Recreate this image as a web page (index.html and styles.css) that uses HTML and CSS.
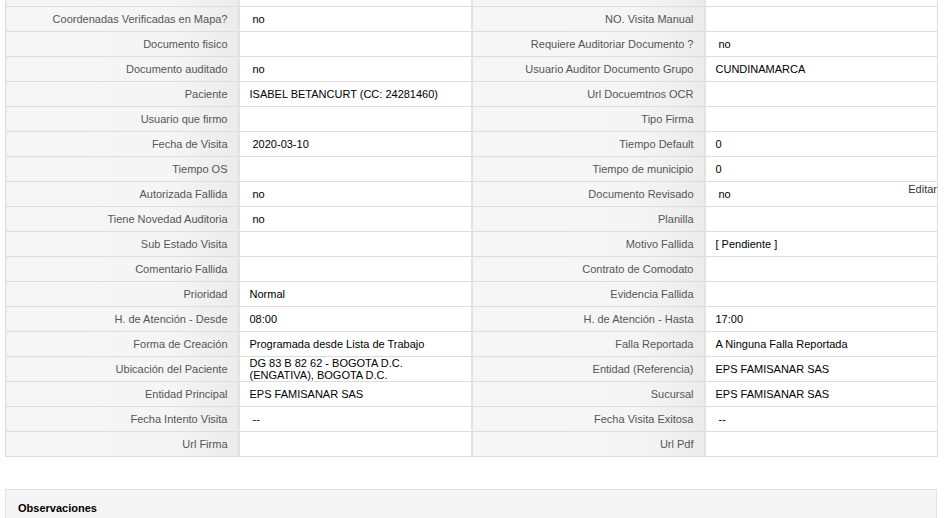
FILE: index.html
```html
<!DOCTYPE html>
<html lang="es">
<head>
  <meta charset="UTF-8">
  <title>Detalle Visita</title>
  <link rel="stylesheet" href="styles.css">
</head>
<body>

  <div class="wrap">
    <table class="detail">
      <colgroup>
        <col class="c-lbl"><col class="c-val"><col class="c-lbl"><col class="c-val">
      </colgroup>
      <tr><td class="lbl"></td><td class="val"></td><td class="lbl"></td><td class="val"></td></tr>
      <tr>
        <td class="lbl">Coordenadas Verificadas en Mapa?</td><td class="val sp">no</td>
        <td class="lbl">NO. Visita Manual</td><td class="val"></td>
      </tr>
      <tr>
        <td class="lbl">Documento fisico</td><td class="val"></td>
        <td class="lbl">Requiere Auditoriar Documento ?</td><td class="val sp">no</td>
      </tr>
      <tr>
        <td class="lbl">Documento auditado</td><td class="val sp">no</td>
        <td class="lbl">Usuario Auditor Documento Grupo</td><td class="val">CUNDINAMARCA</td>
      </tr>
      <tr>
        <td class="lbl">Paciente</td><td class="val">ISABEL BETANCURT (CC: 24281460)</td>
        <td class="lbl">Url Docuemtnos OCR</td><td class="val"></td>
      </tr>
      <tr>
        <td class="lbl">Usuario que firmo</td><td class="val"></td>
        <td class="lbl">Tipo Firma</td><td class="val"></td>
      </tr>
      <tr>
        <td class="lbl">Fecha de Visita</td><td class="val sp">2020-03-10</td>
        <td class="lbl">Tiempo Default</td><td class="val">0</td>
      </tr>
      <tr>
        <td class="lbl">Tiempo OS</td><td class="val"></td>
        <td class="lbl">Tiempo de municipio</td><td class="val">0</td>
      </tr>
      <tr>
        <td class="lbl">Autorizada Fallida</td><td class="val sp">no</td>
        <td class="lbl">Documento Revisado</td><td class="val sp edit-cell">no<a class="edit">Editar</a></td>
      </tr>
      <tr>
        <td class="lbl">Tiene Novedad Auditoria</td><td class="val sp">no</td>
        <td class="lbl">Planilla</td><td class="val"></td>
      </tr>
      <tr>
        <td class="lbl">Sub Estado Visita</td><td class="val"></td>
        <td class="lbl">Motivo Fallida</td><td class="val">[ Pendiente ]</td>
      </tr>
      <tr>
        <td class="lbl">Comentario Fallida</td><td class="val"></td>
        <td class="lbl">Contrato de Comodato</td><td class="val"></td>
      </tr>
      <tr>
        <td class="lbl">Prioridad</td><td class="val">Normal</td>
        <td class="lbl">Evidencia Fallida</td><td class="val"></td>
      </tr>
      <tr>
        <td class="lbl">H. de Atención - Desde</td><td class="val">08:00</td>
        <td class="lbl">H. de Atención - Hasta</td><td class="val">17:00</td>
      </tr>
      <tr>
        <td class="lbl">Forma de Creación</td><td class="val">Programada desde Lista de Trabajo</td>
        <td class="lbl">Falla Reportada</td><td class="val">A Ninguna Falla Reportada</td>
      </tr>
      <tr>
        <td class="lbl">Ubicación del Paciente</td><td class="val tight">DG 83 B 82 62 - BOGOTA D.C.<br>(ENGATIVA), BOGOTA D.C.</td>
        <td class="lbl">Entidad (Referencia)</td><td class="val">EPS FAMISANAR SAS</td>
      </tr>
      <tr>
        <td class="lbl">Entidad Principal</td><td class="val">EPS FAMISANAR SAS</td>
        <td class="lbl">Sucursal</td><td class="val">EPS FAMISANAR SAS</td>
      </tr>
      <tr>
        <td class="lbl">Fecha Intento Visita</td><td class="val sp">--</td>
        <td class="lbl">Fecha Visita Exitosa</td><td class="val sp">--</td>
      </tr>
      <tr>
        <td class="lbl">Url Firma</td><td class="val"></td>
        <td class="lbl">Url Pdf</td><td class="val"></td>
      </tr>
    </table>

    <div class="panel">
      <div class="panel-head">Observaciones</div>
    </div>
  </div>

</body>
</html>
```

FILE: styles.css
```css
body {
  margin: 0;
  font-family: "Liberation Sans", Arial, sans-serif;
  font-size: 11px;
  color: #000;
  background: #fff;
}
.wrap {
  padding: 0 14px 0 5px;
  margin-top: -19px;
}
.detail {
  width: 932px;
  border-collapse: collapse;
  table-layout: fixed;
}
.detail col.c-lbl,
.detail col.c-val {
  width: 233px;
}
.detail td {
  height: 24px;
  padding: 0 10px;
  border: 1px solid #dddddd;
  vertical-align: middle;
  line-height: 13px;
  white-space: nowrap;
}
.detail td.lbl {
  text-align: right;
  color: #555;
  background: linear-gradient(to right, #f6f6f6 0%, #f5f5f5 70%, #ebebeb 100%);
  border-right: 2px solid #e2e2e2;
}
.detail td.val {
  background: #fff;
  border-right: 2px solid #e2e2e2;
}
.detail td.val:last-child {
  border-right: 1px solid #dddddd;
}
.detail td.sp {
  padding-left: 13px;
}
.detail td.tight {
  line-height: 12px;
}
.edit-cell {
  position: relative;
}
.edit {
  position: absolute;
  right: 0;
  top: 1px;
  color: #333;
  font-size: 11px;
}
.panel {
  margin-top: 32px;
  width: 930px;
  border: 1px solid #e3e3e3;
  background: #f5f5f5;
  height: 40px;
}
.panel-head {
  padding: 12px 12px 0 12px;
  font-weight: bold;
  font-size: 11px;
  color: #000;
}
```
